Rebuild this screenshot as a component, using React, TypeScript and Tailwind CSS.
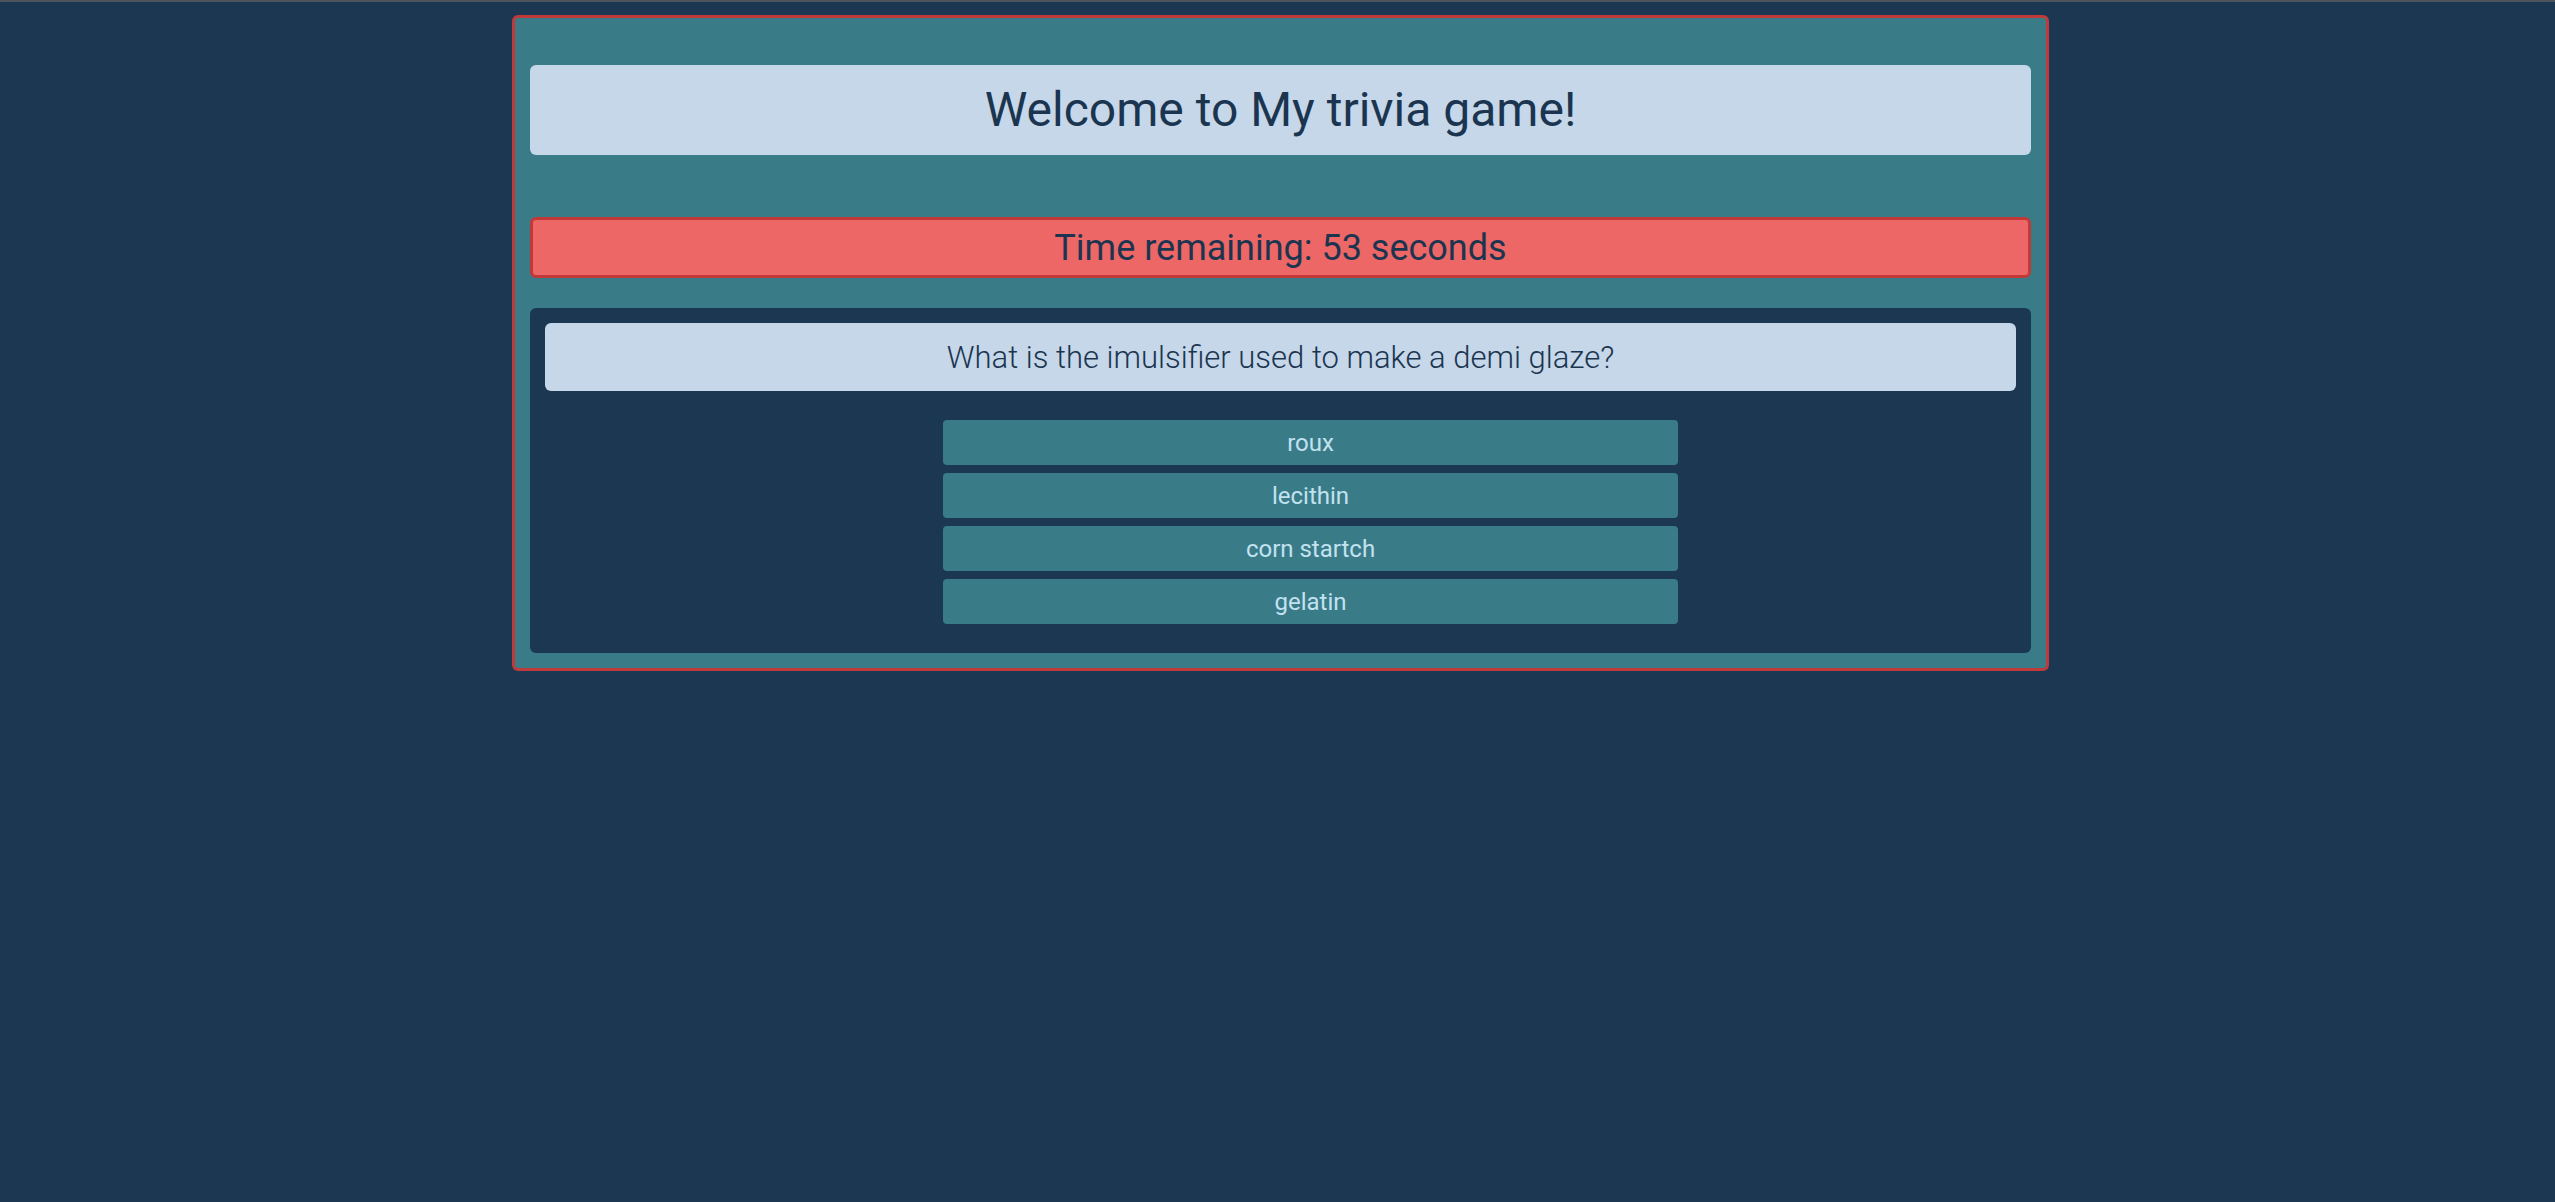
import React from "react";

const answers = ["roux", "lecithin", "corn startch", "gelatin"];

export default function App() {
  return (
    <div className="min-h-screen w-full bg-[#1b3752]" style={{ fontFamily: "Roboto, 'Noto Sans', sans-serif" }}>
      <div className="h-[2px] w-full bg-[#4f535b]" />
      <div className="mt-[13px] ml-[512px] w-[1537px] rounded-md border-[3px] border-[#c0393b] bg-[#3a7b88] px-[15px] pt-[47px] pb-[15px]">
        <div className="flex h-[90px] items-center justify-center rounded-md bg-[#c5d7e9]">
          <h1 className="text-[48px] leading-none text-[#1b3550]">Welcome to My trivia game!</h1>
        </div>
        <div className="mt-[62px] flex h-[61px] items-center justify-center rounded-md border-[3px] border-[#c3393a] bg-[#ec6765]">
          <span className="text-[36px] leading-none text-[#1b3550]">Time remaining: 53 seconds</span>
        </div>
        <div className="mt-[30px] rounded-md bg-[#1b3752] px-[15px] pt-[15px] pb-[29px]">
          <div className="flex h-[68px] items-center justify-center rounded-md bg-[#c5d7e9]">
            <span className="text-[31px] font-light leading-none text-[#1b3550]">What is the imulsifier used to make a demi glaze?</span>
          </div>
          <div className="mt-[29px] ml-[398px] flex w-[735px] flex-col gap-[8px]">
            {answers.map((a) => (
              <button
                key={a}
                className="flex h-[45px] items-center justify-center rounded-[4px] bg-[#3a7b88] text-[24px] leading-none text-[#c2e2f0]"
              >
                {a}
              </button>
            ))}
          </div>
        </div>
      </div>
    </div>
  );
}
